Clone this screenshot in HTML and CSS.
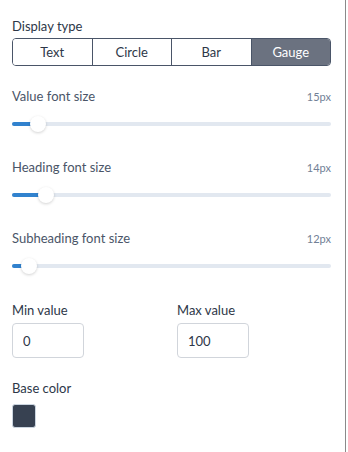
FILE: index.html
```html
<!DOCTYPE html>
<html lang="en">
<head>
  <meta charset="UTF-8" />
  <meta name="viewport" content="width=device-width, initial-scale=1.0"/>
  <title>Display settings</title>
  <link rel="stylesheet" href="styles.css">
</head>
<body>
  <div class="panel">
    <div class="field">
      <div class="label">Display type</div>
      <div class="segmented">
        <button class="seg">Text</button>
        <button class="seg">Circle</button>
        <button class="seg">Bar</button>
        <button class="seg active">Gauge</button>
      </div>
    </div>

    <div class="slider-block">
      <div class="slider-head">
        <span class="slider-label">Value font size</span>
        <span class="slider-value">15px</span>
      </div>
      <div class="track">
        <div class="fill" style="width: 26px"></div>
        <div class="thumb" style="left: 26px"></div>
      </div>
    </div>

    <div class="slider-block">
      <div class="slider-head">
        <span class="slider-label">Heading font size</span>
        <span class="slider-value">14px</span>
      </div>
      <div class="track">
        <div class="fill" style="width: 34px"></div>
        <div class="thumb" style="left: 34px"></div>
      </div>
    </div>

    <div class="slider-block">
      <div class="slider-head">
        <span class="slider-label">Subheading font size</span>
        <span class="slider-value">12px</span>
      </div>
      <div class="track">
        <div class="fill" style="width: 17px"></div>
        <div class="thumb" style="left: 17px"></div>
      </div>
    </div>

    <div class="range-row">
      <div class="range-col">
        <div class="label">Min value</div>
        <input class="num" type="text" value="0" />
      </div>
      <div class="range-col">
        <div class="label">Max value</div>
        <input class="num" type="text" value="100" />
      </div>
    </div>

    <div class="field color-field">
      <div class="label">Base color</div>
      <div class="swatch"></div>
    </div>
  </div>
</body>
</html>
```

FILE: styles.css
```css
html, body {
  margin: 0;
  padding: 0;
  background: #fff;
}
body {
  font-family: Lato, "Open Sans", sans-serif;
  color: #2d3748;
}
.panel {
  width: 319px;
  height: 452px;
  box-sizing: content-box;
  padding: 18px 14px 0 12px;
  border-right: 1px solid #8a8a8a;
}
.label {
  font-size: 13px;
  line-height: 16px;
  color: #2d3748;
  margin-bottom: 4px;
}
.segmented {
  display: flex;
  border: 1px solid #4a5568;
  border-radius: 4px;
  overflow: hidden;
  height: 26px;
}
.seg {
  flex: 1;
  border: none;
  border-left: 1px solid #4a5568;
  background: #fff;
  color: #2d3748;
  font-family: Lato, sans-serif;
  font-size: 13px;
  padding: 0;
  margin: 0;
}
.seg:first-child {
  border-left: none;
}
.seg.active {
  background: #6b7280;
  color: #fff;
}
.slider-block {
  margin-top: 22px;
}
.slider-block + .slider-block {
  margin-top: 33px;
}
.slider-head {
  display: flex;
  justify-content: space-between;
  align-items: baseline;
  height: 16px;
  line-height: 16px;
}
.slider-label {
  font-size: 13px;
  color: #4a5568;
}
.slider-value {
  font-size: 11px;
  color: #718096;
}
.track {
  position: relative;
  margin-top: 18px;
  height: 4px;
  border-radius: 2px;
  background: #e2e8f0;
}
.fill {
  height: 4px;
  border-radius: 2px;
  background: #3182ce;
}
.thumb {
  position: absolute;
  top: -6px;
  width: 16px;
  height: 16px;
  margin-left: -8px;
  border-radius: 50%;
  background: #fff;
  box-shadow: 0 1px 3px rgba(0, 0, 0, 0.18);
}
.range-row {
  display: grid;
  grid-template-columns: 165px 1fr;
  margin-top: 34px;
}
.range-col .label {
  margin-bottom: 5px;
}
.num {
  display: block;
  width: 72px;
  height: 35px;
  box-sizing: border-box;
  border: 1px solid #d1d5db;
  border-radius: 4px;
  padding: 0 10px;
  font-family: Lato, sans-serif;
  font-size: 13px;
  color: #2d3748;
  outline: none;
}
.color-field {
  margin-top: 22px;
}
.color-field .label {
  margin-bottom: 8px;
}
.swatch {
  width: 24px;
  height: 24px;
  box-sizing: border-box;
  border: 1px solid #cbd5e0;
  border-radius: 3px;
  background: #374151;
}
```
